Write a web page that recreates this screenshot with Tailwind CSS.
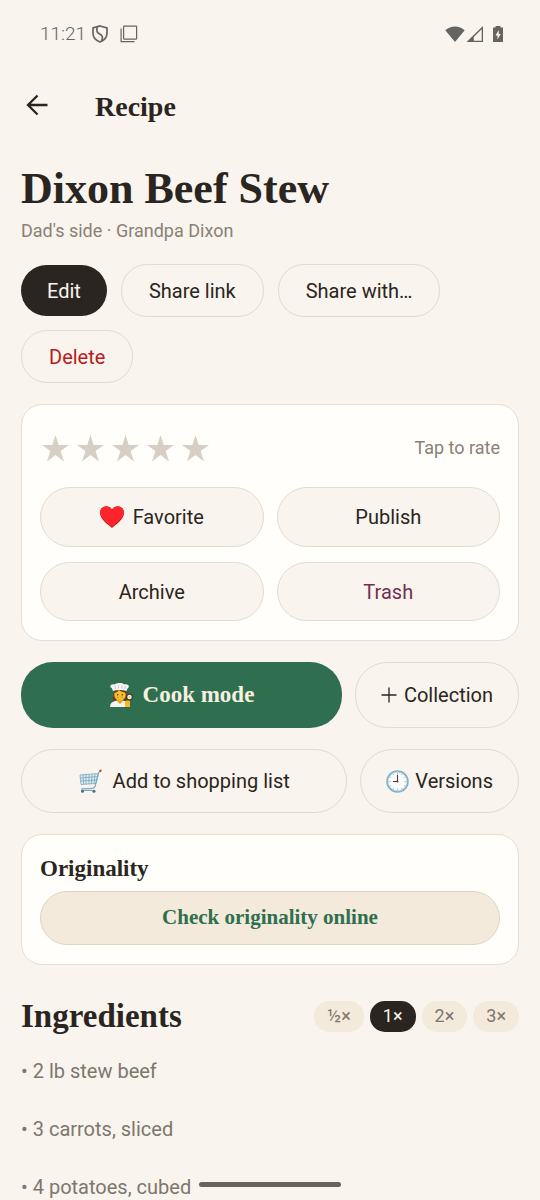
<!DOCTYPE html>
<html lang="en">
<head>
<meta charset="utf-8">
<meta name="viewport" content="width=device-width, initial-scale=1">
<title>Recipe</title>
<script src="https://cdn.jsdelivr.net/npm/@tailwindcss/browser@4"></script>
</head>
<body class="flex h-screen flex-col overflow-hidden bg-[#f9f4ed] font-['Roboto',sans-serif] text-xl text-[#2a2520]">
  <div class="flex h-[68px] shrink-0 items-center pr-9 pl-10 text-[#666460]">
    <span class="text-[19px] font-light">11:21</span>
    <svg class="ml-[6px] h-[18px] w-4" viewBox="0 0 16 18" fill="none" stroke="currentColor" stroke-width="1.7"><path d="M8 1 L15 3 V8 C15 12.500 12 15.500 8 17 C4 15.500 1 12.500 1 8 V3 Z"/><path d="M5.200 2 C3.800 8 6.500 8 9 9.800 C11.600 11.800 10.500 14 9.500 16"/></svg>
    <svg class="ml-3 h-[18px] w-[18px]" viewBox="0 0 18 18" fill="none" stroke="currentColor" stroke-width="1.200"><rect x="3.600" y="1.100" width="13" height="13" rx=".5"/><path d="M1.100 3.600 V16.600 H14.500"/></svg>
    <svg class="ml-auto h-[18px] w-5" viewBox="0 0 20 18" fill="currentColor"><path d="M.3 5.200 C5.500 .1 14.500 .1 19.700 5.200 L10 17 Z"/></svg>
    <svg class="ml-px h-[18px] w-[18px]" viewBox="0 0 18 18" fill="currentColor"><path fill-rule="evenodd" d="M.5 17 L17 1 V17 Z M7.800 15.700 H15.700 V4.200 L7.800 12 Z"/></svg>
    <svg class="ml-2 h-[18px] w-3" viewBox="0 0 12 18"><path d="M3.500 1 H8.500 V2.600 H11 V17 H1 V2.600 H3.500 Z" fill="currentColor"/><path d="M6.800 5 L3.500 10.500 H5.500 V14.600 L8.700 9 H6.800 Z" fill="#f9f4ed"/></svg>
  </div>

  <header class="flex h-[74px] shrink-0 items-center gap-[47px] px-[26px]">
    <button type="button" aria-label="Back" class="flex"><svg class="h-6 w-[22px]" viewBox="0 0 22 24" fill="none" stroke="currentColor" stroke-width="2.300"><path d="M21.500 12 H2 M11.500 2.500 L2 12 L11.500 21.500"/></svg></button>
    <span class="pt-1 font-['Liberation_Serif',serif] text-[28px] font-bold">Recipe</span>
  </header>

  <main class="min-h-0 flex-1 overflow-y-auto px-[21px] pt-5 pb-10 [scrollbar-width:none]">
    <h1 class="font-['Liberation_Serif',serif] text-[44px] leading-[54px] font-bold">Dixon Beef Stew</h1>
    <p class="text-lg leading-[30px] text-[#8a8175]">Dad's side · Grandpa Dixon</p>

    <div class="mt-[18px] flex flex-wrap items-center gap-x-[14px] gap-y-[13px]">
      <button type="button" class="h-[51px] rounded-[26px] bg-[#2a2520] px-[26px] text-[#f9f4ed]">Edit</button>
      <button type="button" class="h-[53px] rounded-[26px] border border-[#e2dbd0] px-[27px]">Share link</button>
      <button type="button" class="h-[53px] rounded-[26px] border border-[#e2dbd0] px-[27px]">Share with…</button>
      <button type="button" class="h-[53px] rounded-[26px] border border-[#e2dbd0] px-[27px] text-[#b71c1c]">Delete</button>
    </div>

    <section class="mt-[21px] rounded-[21px] border border-[#e4ded5] bg-[#fffefa] px-[18px] pt-[18px] pb-[19px]">
      <div class="flex h-[50px] items-center justify-between">
        <div class="flex gap-2 pl-0.5 text-[#d8cfc4]" role="group" aria-label="Rating">
          <button type="button" aria-label="1 star"><svg class="size-[27px]" viewBox="0 0 27 27" fill="currentColor"><path d="M13.500 0 L16.700 10 H27 L18.600 16.100 L22 26.500 L13.500 20 L5 26.500 L8.400 16.100 L0 10 H10.300 Z"/></svg></button>
          <button type="button" aria-label="2 stars"><svg class="size-[27px]" viewBox="0 0 27 27" fill="currentColor"><path d="M13.500 0 L16.700 10 H27 L18.600 16.100 L22 26.500 L13.500 20 L5 26.500 L8.400 16.100 L0 10 H10.300 Z"/></svg></button>
          <button type="button" aria-label="3 stars"><svg class="size-[27px]" viewBox="0 0 27 27" fill="currentColor"><path d="M13.500 0 L16.700 10 H27 L18.600 16.100 L22 26.500 L13.500 20 L5 26.500 L8.400 16.100 L0 10 H10.300 Z"/></svg></button>
          <button type="button" aria-label="4 stars"><svg class="size-[27px]" viewBox="0 0 27 27" fill="currentColor"><path d="M13.500 0 L16.700 10 H27 L18.600 16.100 L22 26.500 L13.500 20 L5 26.500 L8.400 16.100 L0 10 H10.300 Z"/></svg></button>
          <button type="button" aria-label="5 stars"><svg class="size-[27px]" viewBox="0 0 27 27" fill="currentColor"><path d="M13.500 0 L16.700 10 H27 L18.600 16.100 L22 26.500 L13.500 20 L5 26.500 L8.400 16.100 L0 10 H10.300 Z"/></svg></button>
        </div>
        <span class="text-lg text-[#8a8175]">Tap to rate</span>
      </div>
      <div class="mt-[14px] grid grid-cols-2 gap-x-[13px] gap-y-[15px]">
        <button type="button" class="flex h-[60px] items-center justify-center gap-[9px] rounded-[30px] border border-[#e2dbd2] bg-[#f9f4ee]">
          <svg class="h-[22px] w-6" viewBox="0 0 24 22"><path d="M12 22 C8 18.500 0 13.500 0 6.500 C0 0 8.500 -2 12 3.500 C15.500 -2 24 0 24 6.500 C24 13.500 16 18.500 12 22 Z" fill="#c91022"/><path d="M12 20.800 C8 17.500 .3 12.500 .3 6.300 C.3 0 8.500 -1.600 12 3.700 C15.500 -1.600 23.700 0 23.700 6.300 C23.700 12.500 16 17.500 12 20.800 Z" fill="#ff242c"/></svg>
          Favorite</button>
        <button type="button" class="h-[60px] rounded-[30px] border border-[#e2dbd2] bg-[#f9f4ee]">Publish</button>
        <button type="button" class="h-[59px] rounded-[30px] border border-[#e2dbd2] bg-[#f9f4ee]">Archive</button>
        <button type="button" class="h-[59px] rounded-[30px] border border-[#e2dbd2] bg-[#f9f4ee] text-[#722f50]">Trash</button>
      </div>
    </section>

    <div class="mt-[21px] flex gap-[13px]">
      <button type="button" class="flex h-[66px] flex-1 items-center justify-center gap-[10px] rounded-[32px] bg-[#2f6f4f] font-['Liberation_Serif',serif] text-[23px] font-bold text-[#f5f0e0]">
        <svg class="size-6" viewBox="0 0 24 24">
          <path d="M6 8 C2.500 13 5 18 3.500 20 H19 C17.500 17 20 13 17 8 Z" fill="#6b3c2e"/>
          <path d="M1 24 C1 19 5 17.500 11 17.500 C17 17.500 20 19 20 24 Z" fill="#f3f3f3"/>
          <path d="M8.500 15 H13.500 V18.500 L11 21 L8.500 18.500 Z" fill="#e5a600"/>
          <ellipse cx="11" cy="11.800" rx="5.700" ry="6" fill="#fcc21b"/>
          <path d="M5 10 C8 9.500 9 8.500 10 7 C12 9 15 9.500 17 10 V6.500 H5 Z" fill="#6b3c2e"/>
          <path d="M4 8 L3 5.500 C-1 3 3 .5 5.500 1.500 C8 -.6 13.500 -.6 15.500 1.500 C19 .5 21.500 3.500 18.500 5.500 L17.500 8 C13 6.500 8.500 6.500 4 8 Z" fill="#f5f5f5"/>
          <path d="M6 3 L6.500 6 M9.500 2.500 V5.500 M13 2.500 V5.500 M16.300 3 L15.800 6" stroke="#bbb" stroke-width=".8"/>
          <circle cx="8.700" cy="11.700" r=".8" fill="#3d2a25"/><circle cx="13.300" cy="11.700" r=".8" fill="#3d2a25"/>
          <path d="M8.500 14.300 H13.500 C13 16.600 9 16.600 8.500 14.300 Z" fill="#fff" stroke="#9b5a12" stroke-width=".5"/>
          <circle cx="20.500" cy="14" r="3.500" fill="#453c39"/><circle cx="20.500" cy="14" r="2.200" fill="#fff"/><circle cx="20.500" cy="14" r="1" fill="#fcc21b"/>
          <path d="M16 18.500 C17 17.500 20 17 21 18.500 V24 H16 Z" fill="#fcb81b"/>
        </svg>
        Cook mode</button>
      <button type="button" class="flex items-center gap-[7px] rounded-[32px] border border-[#e2dbd0] px-[25px]">
        <svg class="size-4" viewBox="0 0 16 16" stroke="currentColor" stroke-width="1.300"><path d="M8 .5 V15.500 M.5 8 H15.500"/></svg>
        Collection</button>
    </div>

    <div class="mt-[21px] flex gap-[13px]">
      <button type="button" class="flex h-16 flex-1 items-center justify-center gap-[11px] rounded-[32px] border border-[#e2dbd0]">
        <svg class="h-6 w-[23px]" viewBox="0 0 23 24" fill="none">
          <path d="M1 6 L19.500 4.500 L17 14.500 L2 15.500 Z" fill="#e0edf2"/>
          <path d="M1 6 L19.500 4.500 L17 14.500 L2 15.500 Z M1.300 9 L18.700 7.500 M1.600 12 L17.900 11 M4 6 L4.600 15 M7 5.700 V15 M10 5.500 V15 M13 5.200 L12.400 15 M16 5 L15 14.600" stroke="#74a4bd" stroke-width=".8"/>
          <path d="M21.200 1.800 L19.500 4 L16 17.500 C15.500 19.500 13 19.700 3 19.800 V21.500 H16" stroke="#78a9c1" stroke-width="1.200"/>
          <path d="M20.500 2.500 L22.500 1.200" stroke="#e23a40" stroke-width="2"/>
          <circle cx="3.500" cy="22.200" r="1.500" fill="#507082"/><circle cx="15" cy="22.200" r="1.500" fill="#507082"/>
        </svg>
        Add to shopping list</button>
      <button type="button" class="flex items-center gap-[6px] rounded-[32px] border border-[#e2dbd0] px-[25px]">
        <svg class="size-[23px]" viewBox="0 0 23 23" fill="none">
          <circle cx="11.500" cy="11.500" r="10.300" fill="#fdfdfd" stroke="#82b4cf" stroke-width="2"/>
          <circle cx="11.500" cy="11.500" r="9.300" stroke="#c5dbe5" stroke-width=".7"/>
          <path d="M11.500 3.300 V4.500 M11.500 18.500 V19.700 M18.500 11.500 H19.700 M3.300 11.500 H4.500 M15.600 4.400 L15.200 5.100 M18.600 7.400 L17.900 7.800 M18.600 15.600 L17.900 15.200 M15.600 18.600 L15.200 17.900 M7.400 18.600 L7.800 17.900 M4.400 15.600 L5.100 15.200 M4.400 7.400 L5.100 7.800 M7.400 4.400 L7.800 5.100" stroke="#78909c" stroke-width=".8"/>
          <path d="M11.500 5 V11.500 H7" stroke="#5c3430" stroke-width="1.100"/><circle cx="11.500" cy="11.500" r="1" fill="#5c3430"/>
        </svg>
        Versions</button>
    </div>

    <section class="mt-[21px] rounded-[21px] border border-[#e4ded5] bg-[#fffefa] px-[18px] pt-[18px] pb-[19px]">
      <h2 class="font-['Liberation_Serif',serif] text-[23px] leading-8 font-bold">Originality</h2>
      <button type="button" class="mt-[6px] h-[54px] w-full rounded-[27px] border border-[#ddd4c4] bg-[#f3eadb] font-['Liberation_Serif',serif] text-[21px] font-bold text-[#2f6f4f]">Check originality online</button>
    </section>

    <section class="mt-[31px]">
      <div class="flex items-center justify-between">
        <h2 class="font-['Liberation_Serif',serif] text-[33px] leading-10 font-bold">Ingredients</h2>
        <div class="flex gap-[6px] text-lg text-[#7d776e]" role="group" aria-label="Servings">
          <button type="button" class="h-[31px] rounded-[15px] bg-[#f3eadb] px-[13px]">½×</button>
          <button type="button" aria-pressed="true" class="h-[31px] rounded-[15px] bg-[#2a2520] px-[13px] text-[#f9f4ed]">1×</button>
          <button type="button" class="h-[31px] rounded-[15px] bg-[#f3eadb] px-[13px]">2×</button>
          <button type="button" class="h-[31px] rounded-[15px] bg-[#f3eadb] px-[13px]">3×</button>
        </div>
      </div>
      <ul class="mt-[21px] flex flex-col gap-[30px] leading-7 text-[#7d776e]">
        <li>• 2 lb stew beef</li>
        <li>• 3 carrots, sliced</li>
        <li>• 4 potatoes, cubed</li>
      </ul>
    </section>
  </main>

  <div class="fixed bottom-[13px] left-1/2 h-[5px] w-[142px] -translate-x-1/2 rounded-full bg-[#666460]"></div>
</body>
</html>
